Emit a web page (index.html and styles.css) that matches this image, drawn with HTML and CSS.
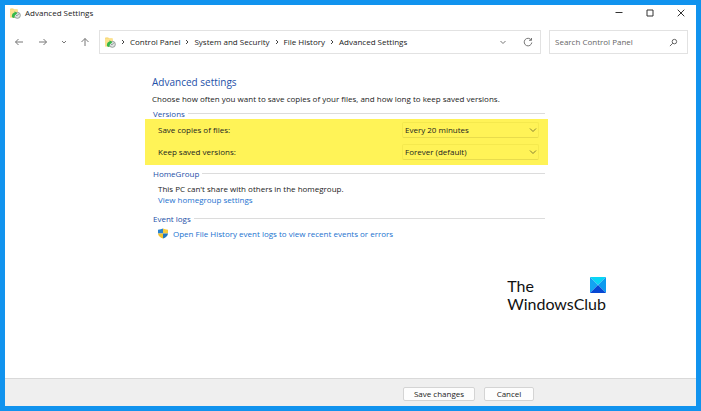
FILE: index.html
```
<!DOCTYPE html>
<html lang="en">
<head>
    <meta charset="UTF-8" />
    <meta name="viewport" content="width=device-width, initial-scale=1.0"/>
    <title>Advanced Settings</title>
    <link rel="stylesheet" href="styles.css">
</head>
<body>

    <svg class="sprite" aria-hidden="true">
        <symbol id="history" viewBox="0 0 12 12">
            <path d="M0 1.5Q0 .5 1 .5h2.5l1 1H8v8H0z" fill="#f3cf62"/>
            <path d="M0 1.500h8.500v9H0z" fill="#fce28e"/>
            <circle cx="8" cy="8" r="3.300" fill="#dfe3e2" stroke="#8f9896" stroke-width="1"/>
            <path d="M8 8.200L9.600 6.300M8 8.200H6.600" stroke="#68706e" stroke-width=".7" fill="none"/>
            <path d="M2 9.500Q2 5.500 5 5V3.500l3 2.200-2.500 2.200Q4.300 9 5 10.800 3 11 2 9.500z" fill="#35b94a"/>
        </symbol>
        <symbol id="right" viewBox="0 0 5 6">
            <path d="M1 1l2 2-2 2" fill="none" stroke="currentColor" stroke-width="1"/>
        </symbol>
        <symbol id="down" viewBox="0 0 8 6">
            <path d="M1 1.500l3 3 3-3" fill="none" stroke="currentColor" stroke-width=".9"/>
        </symbol>
    </svg>

    <div class="window">
        <header class="title-bar">
            <svg class="app-icon"><use href="#history"/></svg>
            <h1>Advanced Settings</h1>
            <div class="window-buttons">
                <button type="button" aria-label="Minimize">
                    <svg viewBox="0 0 8 8"><path d="M.5 3.500h7"/></svg>
                </button>
                <button type="button" aria-label="Maximize">
                    <svg viewBox="0 0 8 8"><path d="M1 1h6v6H1z"/></svg>
                </button>
                <button type="button" aria-label="Close">
                    <svg viewBox="0 0 8 8"><path d="M.7.7l6.600 6.600M7.300.7L.7 7.300"/></svg>
                </button>
            </div>
        </header>

        <nav class="nav-bar">
            <div class="history-buttons">
                <button type="button" aria-label="Back">
                    <svg viewBox="0 0 10 10"><path d="M9 5H1.500M4.500 2l-3 3 3 3"/></svg>
                </button>
                <button type="button" aria-label="Forward">
                    <svg viewBox="0 0 10 10"><path d="M1 5h7.500M5.500 2l3 3-3 3"/></svg>
                </button>
                <button type="button" class="recent" aria-label="Recent locations">
                    <svg viewBox="0 0 10 10"><path d="M3 4l2 2 2-2"/></svg>
                </button>
                <button type="button" aria-label="Up">
                    <svg viewBox="0 0 10 10"><path d="M5 9V1.500M1.500 5L5 1.500 8.500 5"/></svg>
                </button>
            </div>
            <div class="address">
                <svg class="app-icon"><use href="#history"/></svg>
                <ol class="crumbs">
                    <li><svg><use href="#right"/></svg><a href="#">Control Panel</a></li>
                    <li><svg><use href="#right"/></svg><a href="#">System and Security</a></li>
                    <li><svg><use href="#right"/></svg><a href="#">File History</a></li>
                    <li><svg><use href="#right"/></svg><a href="#">Advanced Settings</a></li>
                </ol>
                <button type="button" aria-label="Previous locations">
                    <svg viewBox="0 0 10 10"><path d="M2.500 4L5 6.500 7.500 4"/></svg>
                </button>
                <button type="button" aria-label="Refresh">
                    <svg viewBox="0 0 10 10"><path d="M8.200 3A3.800 3.800 0 1 0 8.800 5.500M8.500 1v2.300H6"/></svg>
                </button>
            </div>
            <div class="search">
                <input type="text" aria-label="Search Control Panel" placeholder="Search Control Panel">
                <svg viewBox="0 0 10 10"><circle cx="6" cy="4" r="2.500"/><path d="M4.200 5.800L1 9"/></svg>
            </div>
        </nav>

        <main>
            <form class="settings" id="settings">
                <h2>Advanced settings</h2>
                <p class="intro">Choose how often you want to save copies of your files, and how long to keep saved versions.</p>

                <h3>Versions</h3>
                <div class="versions">
                    <label for="frequency">Save copies of files:</label>
                    <div class="dropdown">
                        <select id="frequency">
                            <option>Every 20 minutes</option>
                            <option>Every hour</option>
                            <option>Daily</option>
                        </select>
                        <svg><use href="#down"/></svg>
                    </div>
                    <label for="keep">Keep saved versions:</label>
                    <div class="dropdown">
                        <select id="keep">
                            <option>Forever (default)</option>
                            <option>1 year</option>
                            <option>Until space is needed</option>
                        </select>
                        <svg><use href="#down"/></svg>
                    </div>
                </div>

                <h3>HomeGroup</h3>
                <div class="group">
                    <p>This PC can't share with others in the homegroup.</p>
                    <a href="#">View homegroup settings</a>
                </div>

                <h3>Event logs</h3>
                <div class="group logs">
                    <svg class="shield" viewBox="0 0 10 11">
                        <path d="M5 .5Q3 1.500 0 1.700V5.500h5z" fill="#2b83cf"/>
                        <path d="M5 .5Q7 1.500 10 1.700V5.500H5z" fill="#f6cb3c"/>
                        <path d="M0 5.500Q.5 9 5 10.500v-5z" fill="#f3c42e"/>
                        <path d="M10 5.500Q9.500 9 5 10.500v-5z" fill="#2477bd"/>
                    </svg>
                    <a href="#">Open File History event logs to view recent events or errors</a>
                </div>
            </form>

            <div class="brand">
                <span>The</span>
                <svg viewBox="0 0 16 16">
                    <path d="M0 0h16L8 8z" fill="#08d5f5"/>
                    <path d="M0 0l8 8-8 8z" fill="#12a4f2"/>
                    <path d="M16 0v16L8 8z" fill="#0d9bef"/>
                    <path d="M0 16l8-8 8 8z" fill="#0647d3"/>
                </svg>
                <span class="brand-name">WindowsClub</span>
            </div>
        </main>

        <footer>
            <button type="submit" form="settings" class="save">Save changes</button>
            <button type="button">Cancel</button>
        </footer>
    </div>

</body>
</html>
```

FILE: styles.css
```
* {
    box-sizing: border-box;
}

body {
    margin: 0;
    padding: 5px;
    min-height: 100vh;
    display: flex;
    background: #1193ee;
    color: #222;
    font-family: "Open Sans", "Noto Sans", sans-serif;
    font-size: 8px;
    line-height: 12px;
}

h1, h2, h3, p, ol {
    margin: 0;
    padding: 0;
    font-weight: normal;
}

button, input, select {
    font: inherit;
    color: inherit;
}

a {
    color: #1a72cf;
    text-decoration: none;
}

a:hover {
    text-decoration: underline;
}

.sprite {
    position: absolute;
    width: 0;
    height: 0;
}

.window {
    flex: 1;
    display: flex;
    flex-direction: column;
    background: #fff;
}

/* Title bar */
.title-bar {
    display: flex;
    align-items: center;
    height: 16px;
    padding-left: 5px;
}

.title-bar h1 {
    flex: 1;
    margin-left: 4px;
    font-size: 8px;
}

.app-icon {
    width: 11px;
    height: 11px;
    flex: none;
}

.window-buttons {
    display: flex;
}

.window-buttons button,
.history-buttons button,
.address button {
    display: flex;
    align-items: center;
    justify-content: center;
    padding: 0;
    border: none;
    background: none;
}

.window-buttons button {
    width: 31px;
    height: 16px;
}

.window-buttons svg {
    width: 8px;
    height: 8px;
}

.window-buttons path {
    fill: none;
    stroke: #333;
}

/* Navigation */
.nav-bar {
    display: flex;
    align-items: center;
    padding: 9px 8px 0 9px;
}

.history-buttons {
    display: flex;
    gap: 14px;
    width: 85px;
}

.history-buttons .recent {
    margin: 0 -3px;
}

.nav-bar button svg {
    width: 10px;
    height: 10px;
    flex: none;
}

.nav-bar button path {
    fill: none;
    stroke: #777;
}

.address {
    flex: 1;
    display: flex;
    align-items: center;
    height: 24px;
    padding-left: 5px;
    border: 1px solid #e2e2e2;
}

.address button {
    width: 25px;
}

.crumbs {
    flex: 1;
    display: flex;
    list-style: none;
}

.crumbs li {
    display: flex;
    align-items: center;
}

.crumbs svg {
    width: 5px;
    height: 6px;
    margin: 0 4px 0 5px;
    color: #444;
}

.crumbs a {
    color: #222;
}

.search {
    display: flex;
    align-items: center;
    width: 139px;
    height: 24px;
    margin-left: 8px;
    padding: 0 9px 0 5px;
    border: 1px solid #e2e2e2;
}

.search input {
    flex: 1;
    min-width: 0;
    padding: 0;
    border: none;
    outline: none;
    background: none;
}

.search input::placeholder {
    color: #666;
    opacity: 1;
}

.search svg {
    width: 9px;
    height: 9px;
    fill: none;
    stroke: #555;
}

/* Settings */
main {
    flex: 1;
    display: flex;
    flex-direction: column;
    padding: 20px 90px 20px 140px;
}

.settings {
    width: 100%;
    max-width: 403px;
}

.settings h2 {
    margin-left: 7px;
    color: #2450a8;
    font-size: 10px;
    line-height: 16px;
}

.intro {
    margin: 3px 0 3px 7px;
}

.settings h3 {
    display: flex;
    align-items: center;
    margin: 0 3px 0 8px;
    color: #2450a8;
    font-size: 8px;
    line-height: 11px;
}

.settings h3::after {
    content: "";
    flex: 1;
    height: 1px;
    margin-left: 3px;
    background: #dcdcdc;
}

.versions {
    display: grid;
    grid-template-columns: 1fr 137px;
    row-gap: 6px;
    align-items: center;
    margin-bottom: 3px;
    padding: 3px 9px 5px 13px;
    background: #fff357;
}

.dropdown {
    display: grid;
    align-items: center;
}

.dropdown select {
    grid-area: 1 / 1;
    width: 100%;
    height: 16px;
    padding: 0 2px;
    border: 1px solid #f5e94e;
    border-bottom-color: #e8dc4c;
    border-radius: 2px;
    background: none;
    appearance: none;
}

.dropdown svg {
    grid-area: 1 / 1;
    justify-self: end;
    width: 8px;
    height: 6px;
    margin-right: 2px;
    color: #77722f;
    pointer-events: none;
}

.group {
    margin: 4px 0 8px 13px;
    line-height: 11px;
}

.group a {
    display: block;
}

.logs {
    display: flex;
    align-items: center;
}

.shield {
    width: 10px;
    height: 11px;
    margin-right: 5px;
}

/* Logo */
.brand {
    align-self: flex-end;
    display: grid;
    grid-template-columns: 1fr 16px;
    margin-top: 30px;
    color: #111;
    font-family: Lato, "Open Sans", sans-serif;
    font-size: 16px;
    line-height: 18px;
}

.brand svg {
    width: 16px;
    height: 16px;
}

.brand-name {
    grid-column: 1 / 3;
}

/* Footer */
footer {
    display: flex;
    justify-content: flex-end;
    gap: 9px;
    padding: 8px 162px 5px 0;
    border-top: 1px solid #d9d9d9;
    background: #efefef;
}

footer button {
    width: 50px;
    height: 14px;
    padding: 0;
    border: 1px solid #d4d4d4;
    border-radius: 2px;
    background: #fdfdfd;
    line-height: 12px;
}

footer .save {
    width: 72px;
}
```
